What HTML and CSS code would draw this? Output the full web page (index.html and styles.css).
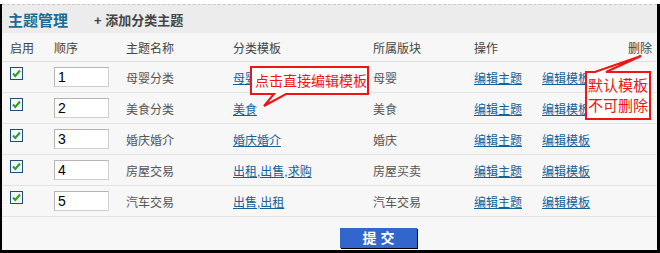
FILE: index.html
```html
<!DOCTYPE html>
<html lang="zh-CN">
<head>
    <meta charset="UTF-8"/>
    <title>主题管理</title>
    <link rel="stylesheet" href="styles.css">
</head>
<body>
<div class="panel">
    <div class="head">
        <span class="head-title">主题管理</span>
        <a class="head-add">+ 添加分类主题</a>
    </div>
    <div class="grid thead">
        <span>启用</span>
        <span>顺序</span>
        <span>主题名称</span>
        <span>分类模板</span>
        <span>所属版块</span>
        <span>操作</span>
        <span class="col-del">删除</span>
    </div>
    <div class="grid row">
        <span class="check"><svg width="13" height="13" viewBox="0 0 13 13"><rect x="0.5" y="0.5" width="12" height="12" fill="#f4f7fa" stroke="#1f4f78"/><path d="M3 6.5 L5.3 9 L10 3.5" fill="none" stroke="#2a9d2a" stroke-width="2"/></svg></span>
        <input class="order" value="1">
        <span class="name">母婴分类</span>
        <a class="link">母婴</a>
        <span class="name">母婴</span>
        <span class="ops"><a class="link">编辑主题</a><a class="link">编辑模板</a></span>
        <span></span>
    </div>
    <div class="grid row">
        <span class="check"><svg width="13" height="13" viewBox="0 0 13 13"><rect x="0.5" y="0.5" width="12" height="12" fill="#f4f7fa" stroke="#1f4f78"/><path d="M3 6.5 L5.3 9 L10 3.5" fill="none" stroke="#2a9d2a" stroke-width="2"/></svg></span>
        <input class="order" value="2">
        <span class="name">美食分类</span>
        <a class="link">美食</a>
        <span class="name">美食</span>
        <span class="ops"><a class="link">编辑主题</a><a class="link">编辑模板</a></span>
        <span></span>
    </div>
    <div class="grid row">
        <span class="check"><svg width="13" height="13" viewBox="0 0 13 13"><rect x="0.5" y="0.5" width="12" height="12" fill="#f4f7fa" stroke="#1f4f78"/><path d="M3 6.5 L5.3 9 L10 3.5" fill="none" stroke="#2a9d2a" stroke-width="2"/></svg></span>
        <input class="order" value="3">
        <span class="name">婚庆婚介</span>
        <a class="link">婚庆婚介</a>
        <span class="name">婚庆</span>
        <span class="ops"><a class="link">编辑主题</a><a class="link">编辑模板</a></span>
        <span></span>
    </div>
    <div class="grid row">
        <span class="check"><svg width="13" height="13" viewBox="0 0 13 13"><rect x="0.5" y="0.5" width="12" height="12" fill="#f4f7fa" stroke="#1f4f78"/><path d="M3 6.5 L5.3 9 L10 3.5" fill="none" stroke="#2a9d2a" stroke-width="2"/></svg></span>
        <input class="order" value="4">
        <span class="name">房屋交易</span>
        <a class="link">出租,出售,求购</a>
        <span class="name">房屋买卖</span>
        <span class="ops"><a class="link">编辑主题</a><a class="link">编辑模板</a></span>
        <span></span>
    </div>
    <div class="grid row">
        <span class="check"><svg width="13" height="13" viewBox="0 0 13 13"><rect x="0.5" y="0.5" width="12" height="12" fill="#f4f7fa" stroke="#1f4f78"/><path d="M3 6.5 L5.3 9 L10 3.5" fill="none" stroke="#2a9d2a" stroke-width="2"/></svg></span>
        <input class="order" value="5">
        <span class="name">汽车交易</span>
        <a class="link">出售,出租</a>
        <span class="name">汽车交易</span>
        <span class="ops"><a class="link">编辑主题</a><a class="link">编辑模板</a></span>
        <span></span>
    </div>
    <div class="foot">
        <button class="submit-btn" type="button">提 交</button>
    </div>
</div>

<!-- 标注气泡 -->
<svg class="callouts" width="660" height="253" viewBox="0 0 660 253">
    <path d="M251 67 H368 V94 H286 L264 106 L274 94 H251 Z" fill="#fff" stroke="#f01414" stroke-width="2"/>
    <path d="M586 72 H595 L641 56 L606 72 H650 V119 H586 Z" fill="#fff" stroke="#f01414" stroke-width="2"/>
</svg>
<span class="tip tip-edit">点击直接编辑模板</span>
<span class="tip tip-del">默认模板<br>不可删除</span>
</body>
</html>
```

FILE: styles.css
```css
body {
    margin: 0;
    padding-top: 4px;
    position: relative;
    background-color: #fff;
    font-family: "Liberation Sans", "Noto Sans CJK SC", sans-serif;
    font-size: 12px;
    color: #444;
}

/* 外框 */
.panel {
    width: 660px;
    height: 249px;
    box-sizing: border-box;
    border-left: 2px solid #000;
    border-right: 3px solid #000;
    border-bottom: 3px solid #000;
    background-color: #f7f7f7;
}

/* 标题栏 */
.head {
    height: 28px;
    border-top: 1px dashed #c8c8c8;
    background-color: #ececec;
    display: flex;
    align-items: center;
    padding-left: 6px;
}

.head-title {
    font-size: 15px;
    font-weight: bold;
    color: #1b6d93;
}

.head-add {
    margin-left: 26px;
    font-size: 13px;
    font-weight: bold;
    color: #444;
}

/* 表格布局 */
.grid {
    display: grid;
    grid-template-columns: 44px 72px 107px 140px 101px 1fr auto;
    align-items: center;
    padding-left: 8px;
    padding-right: 5px;
}

.thead {
    height: 28px;
    border-bottom: 1px solid #dcdcdc;
}

.row {
    height: 30px;
    border-bottom: 1px solid #e2e2e2;
}

.check {
    align-self: start;
    margin-top: 5px;
    height: 13px;
}

.check svg {
    display: block;
}

.order {
    width: 55px;
    height: 20px;
    box-sizing: border-box;
    border: 1px solid #cfcfcf;
    border-top-color: #b4b4b4;
    border-left-color: #b4b4b4;
    padding: 0 3px;
    font-family: "Liberation Sans", sans-serif;
    font-size: 14px;
    color: #000;
    background-color: #fff;
}

.name {
    color: #555;
}

.link {
    color: #13619a;
    text-decoration: underline;
    justify-self: start;
}

.ops {
    display: flex;
    gap: 20px;
}

/* 提交按钮 */
.foot {
    padding-top: 11px;
    padding-left: 338px;
}

.submit-btn {
    width: 77px;
    height: 20px;
    border: none;
    padding: 0;
    background-color: #3366cc;
    box-shadow: 1px 1px 0 #000;
    color: #fff;
    font-family: "Liberation Sans", "Noto Sans CJK SC", sans-serif;
    font-size: 14px;
    font-weight: bold;
    line-height: 20px;
}

/* 标注 */
.callouts {
    position: absolute;
    left: 0;
    top: 0;
    pointer-events: none;
}

.tip {
    position: absolute;
    color: #f01414;
    font-family: "Noto Sans CJK SC", sans-serif;
    white-space: nowrap;
}

.tip-edit {
    left: 255px;
    top: 70px;
    font-size: 14px;
    line-height: 20px;
}

.tip-del {
    left: 588px;
    top: 75px;
    font-size: 15px;
    line-height: 20px;
}
```
